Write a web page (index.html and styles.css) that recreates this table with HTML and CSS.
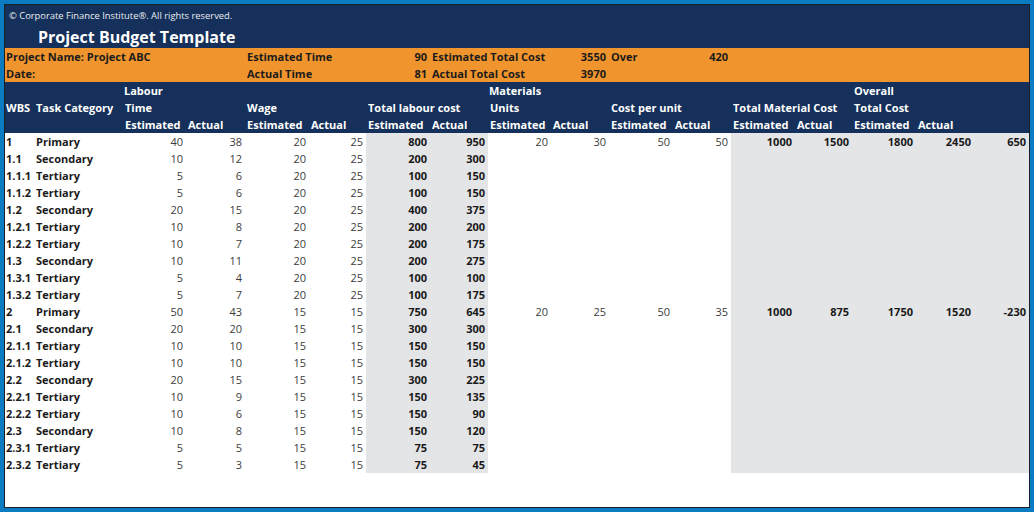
FILE: index.html
```html
<!DOCTYPE html>
<html>
<head>
<meta charset="utf-8">
<link rel="stylesheet" href="styles.css">
</head>
<body>
<div class="frame">
<div class="sheet">
  <div class="top">
    <div class="copy">© Corporate Finance Institute®. All rights reserved.</div>
    <div class="title">Project Budget Template</div>
  </div>
  <div class="info">
    <div class="row">
      <div class="c l" style="grid-column:1/5">Project Name: Project ABC</div>
      <div class="c l" style="grid-column:5/7">Estimated Time</div>
      <div class="c r" style="grid-column:7">90</div>
      <div class="c l" style="grid-column:8/10">Estimated Total Cost</div>
      <div class="c r" style="grid-column:10">3550</div>
      <div class="c l" style="grid-column:11">Over</div>
      <div class="c r" style="grid-column:12">420</div>
    </div>
    <div class="row">
      <div class="c l" style="grid-column:1/5">Date:</div>
      <div class="c l" style="grid-column:5/7">Actual Time</div>
      <div class="c r" style="grid-column:7">81</div>
      <div class="c l" style="grid-column:8/10">Actual Total Cost</div>
      <div class="c r" style="grid-column:10">3970</div>
    </div>
  </div>
  <div class="head">
    <div class="row">
      <div class="c l" style="grid-column:3/5">Labour</div>
      <div class="c l" style="grid-column:9/11">Materials</div>
      <div class="c l" style="grid-column:15/17">Overall</div>
    </div>
    <div class="row">
      <div class="c l" style="grid-column:1">WBS</div>
      <div class="c l" style="grid-column:2">Task Category</div>
      <div class="c l" style="grid-column:3/5">Time</div>
      <div class="c l" style="grid-column:5/7">Wage</div>
      <div class="c l" style="grid-column:7/9">Total labour cost</div>
      <div class="c l" style="grid-column:9/11">Units</div>
      <div class="c l" style="grid-column:11/13">Cost per unit</div>
      <div class="c l" style="grid-column:13/15">Total Material Cost</div>
      <div class="c l" style="grid-column:15/17">Total Cost</div>
    </div>
    <div class="row">
      <div class="c l" style="grid-column:3">Estimated</div><div class="c l">Actual</div>
      <div class="c l">Estimated</div><div class="c l">Actual</div>
      <div class="c l">Estimated</div><div class="c l">Actual</div>
      <div class="c l">Estimated</div><div class="c l">Actual</div>
      <div class="c l">Estimated</div><div class="c l">Actual</div>
      <div class="c l">Estimated</div><div class="c l">Actual</div>
      <div class="c l">Estimated</div><div class="c l">Actual</div>
    </div>
  </div>
  <div class="body">
    <div class="row"><div class="c l b">1</div><div class="c l b">Primary</div><div class="c r">40</div><div class="c r">38</div><div class="c r">20</div><div class="c r">25</div><div class="c r b g">800</div><div class="c r b g">950</div><div class="c r">20</div><div class="c r">30</div><div class="c r">50</div><div class="c r">50</div><div class="c r b g">1000</div><div class="c r b g">1500</div><div class="c r b g">1800</div><div class="c r b g">2450</div><div class="c r b g">650</div></div>
    <div class="row"><div class="c l b">1.1</div><div class="c l b">Secondary</div><div class="c r">10</div><div class="c r">12</div><div class="c r">20</div><div class="c r">25</div><div class="c r b g">200</div><div class="c r b g">300</div><div class="c"></div><div class="c"></div><div class="c"></div><div class="c"></div><div class="c g"></div><div class="c g"></div><div class="c g"></div><div class="c g"></div><div class="c g"></div></div>
    <div class="row"><div class="c l b">1.1.1</div><div class="c l b">Tertiary</div><div class="c r">5</div><div class="c r">6</div><div class="c r">20</div><div class="c r">25</div><div class="c r b g">100</div><div class="c r b g">150</div><div class="c"></div><div class="c"></div><div class="c"></div><div class="c"></div><div class="c g"></div><div class="c g"></div><div class="c g"></div><div class="c g"></div><div class="c g"></div></div>
    <div class="row"><div class="c l b">1.1.2</div><div class="c l b">Tertiary</div><div class="c r">5</div><div class="c r">6</div><div class="c r">20</div><div class="c r">25</div><div class="c r b g">100</div><div class="c r b g">150</div><div class="c"></div><div class="c"></div><div class="c"></div><div class="c"></div><div class="c g"></div><div class="c g"></div><div class="c g"></div><div class="c g"></div><div class="c g"></div></div>
    <div class="row"><div class="c l b">1.2</div><div class="c l b">Secondary</div><div class="c r">20</div><div class="c r">15</div><div class="c r">20</div><div class="c r">25</div><div class="c r b g">400</div><div class="c r b g">375</div><div class="c"></div><div class="c"></div><div class="c"></div><div class="c"></div><div class="c g"></div><div class="c g"></div><div class="c g"></div><div class="c g"></div><div class="c g"></div></div>
    <div class="row"><div class="c l b">1.2.1</div><div class="c l b">Tertiary</div><div class="c r">10</div><div class="c r">8</div><div class="c r">20</div><div class="c r">25</div><div class="c r b g">200</div><div class="c r b g">200</div><div class="c"></div><div class="c"></div><div class="c"></div><div class="c"></div><div class="c g"></div><div class="c g"></div><div class="c g"></div><div class="c g"></div><div class="c g"></div></div>
    <div class="row"><div class="c l b">1.2.2</div><div class="c l b">Tertiary</div><div class="c r">10</div><div class="c r">7</div><div class="c r">20</div><div class="c r">25</div><div class="c r b g">200</div><div class="c r b g">175</div><div class="c"></div><div class="c"></div><div class="c"></div><div class="c"></div><div class="c g"></div><div class="c g"></div><div class="c g"></div><div class="c g"></div><div class="c g"></div></div>
    <div class="row"><div class="c l b">1.3</div><div class="c l b">Secondary</div><div class="c r">10</div><div class="c r">11</div><div class="c r">20</div><div class="c r">25</div><div class="c r b g">200</div><div class="c r b g">275</div><div class="c"></div><div class="c"></div><div class="c"></div><div class="c"></div><div class="c g"></div><div class="c g"></div><div class="c g"></div><div class="c g"></div><div class="c g"></div></div>
    <div class="row"><div class="c l b">1.3.1</div><div class="c l b">Tertiary</div><div class="c r">5</div><div class="c r">4</div><div class="c r">20</div><div class="c r">25</div><div class="c r b g">100</div><div class="c r b g">100</div><div class="c"></div><div class="c"></div><div class="c"></div><div class="c"></div><div class="c g"></div><div class="c g"></div><div class="c g"></div><div class="c g"></div><div class="c g"></div></div>
    <div class="row"><div class="c l b">1.3.2</div><div class="c l b">Tertiary</div><div class="c r">5</div><div class="c r">7</div><div class="c r">20</div><div class="c r">25</div><div class="c r b g">100</div><div class="c r b g">175</div><div class="c"></div><div class="c"></div><div class="c"></div><div class="c"></div><div class="c g"></div><div class="c g"></div><div class="c g"></div><div class="c g"></div><div class="c g"></div></div>
    <div class="row"><div class="c l b">2</div><div class="c l b">Primary</div><div class="c r">50</div><div class="c r">43</div><div class="c r">15</div><div class="c r">15</div><div class="c r b g">750</div><div class="c r b g">645</div><div class="c r">20</div><div class="c r">25</div><div class="c r">50</div><div class="c r">35</div><div class="c r b g">1000</div><div class="c r b g">875</div><div class="c r b g">1750</div><div class="c r b g">1520</div><div class="c r b g">-230</div></div>
    <div class="row"><div class="c l b">2.1</div><div class="c l b">Secondary</div><div class="c r">20</div><div class="c r">20</div><div class="c r">15</div><div class="c r">15</div><div class="c r b g">300</div><div class="c r b g">300</div><div class="c"></div><div class="c"></div><div class="c"></div><div class="c"></div><div class="c g"></div><div class="c g"></div><div class="c g"></div><div class="c g"></div><div class="c g"></div></div>
    <div class="row"><div class="c l b">2.1.1</div><div class="c l b">Tertiary</div><div class="c r">10</div><div class="c r">10</div><div class="c r">15</div><div class="c r">15</div><div class="c r b g">150</div><div class="c r b g">150</div><div class="c"></div><div class="c"></div><div class="c"></div><div class="c"></div><div class="c g"></div><div class="c g"></div><div class="c g"></div><div class="c g"></div><div class="c g"></div></div>
    <div class="row"><div class="c l b">2.1.2</div><div class="c l b">Tertiary</div><div class="c r">10</div><div class="c r">10</div><div class="c r">15</div><div class="c r">15</div><div class="c r b g">150</div><div class="c r b g">150</div><div class="c"></div><div class="c"></div><div class="c"></div><div class="c"></div><div class="c g"></div><div class="c g"></div><div class="c g"></div><div class="c g"></div><div class="c g"></div></div>
    <div class="row"><div class="c l b">2.2</div><div class="c l b">Secondary</div><div class="c r">20</div><div class="c r">15</div><div class="c r">15</div><div class="c r">15</div><div class="c r b g">300</div><div class="c r b g">225</div><div class="c"></div><div class="c"></div><div class="c"></div><div class="c"></div><div class="c g"></div><div class="c g"></div><div class="c g"></div><div class="c g"></div><div class="c g"></div></div>
    <div class="row"><div class="c l b">2.2.1</div><div class="c l b">Tertiary</div><div class="c r">10</div><div class="c r">9</div><div class="c r">15</div><div class="c r">15</div><div class="c r b g">150</div><div class="c r b g">135</div><div class="c"></div><div class="c"></div><div class="c"></div><div class="c"></div><div class="c g"></div><div class="c g"></div><div class="c g"></div><div class="c g"></div><div class="c g"></div></div>
    <div class="row"><div class="c l b">2.2.2</div><div class="c l b">Tertiary</div><div class="c r">10</div><div class="c r">6</div><div class="c r">15</div><div class="c r">15</div><div class="c r b g">150</div><div class="c r b g">90</div><div class="c"></div><div class="c"></div><div class="c"></div><div class="c"></div><div class="c g"></div><div class="c g"></div><div class="c g"></div><div class="c g"></div><div class="c g"></div></div>
    <div class="row"><div class="c l b">2.3</div><div class="c l b">Secondary</div><div class="c r">10</div><div class="c r">8</div><div class="c r">15</div><div class="c r">15</div><div class="c r b g">150</div><div class="c r b g">120</div><div class="c"></div><div class="c"></div><div class="c"></div><div class="c"></div><div class="c g"></div><div class="c g"></div><div class="c g"></div><div class="c g"></div><div class="c g"></div></div>
    <div class="row"><div class="c l b">2.3.1</div><div class="c l b">Tertiary</div><div class="c r">5</div><div class="c r">5</div><div class="c r">15</div><div class="c r">15</div><div class="c r b g">75</div><div class="c r b g">75</div><div class="c"></div><div class="c"></div><div class="c"></div><div class="c"></div><div class="c g"></div><div class="c g"></div><div class="c g"></div><div class="c g"></div><div class="c g"></div></div>
    <div class="row"><div class="c l b">2.3.2</div><div class="c l b">Tertiary</div><div class="c r">5</div><div class="c r">3</div><div class="c r">15</div><div class="c r">15</div><div class="c r b g">75</div><div class="c r b g">45</div><div class="c"></div><div class="c"></div><div class="c"></div><div class="c"></div><div class="c g"></div><div class="c g"></div><div class="c g"></div><div class="c g"></div><div class="c g"></div></div>
  </div>
</div>
</div>
</body>
</html>
```
FILE: styles.css
```css
html, body {
  margin: 0;
  padding: 0;
}
body {
  width: 1034px;
  height: 512px;
  overflow: hidden;
  font-family: "Open Sans", "DejaVu Sans", sans-serif;
}
.frame {
  box-sizing: border-box;
  width: 1034px;
  height: 512px;
  border: 4px solid #0b7cc2;
  background: #0b7cc2;
}
.sheet {
  box-sizing: border-box;
  height: 100%;
  border: 1px solid #17202b;
  background: #ffffff;
  overflow: hidden;
}
.top {
  background: #15305a;
  color: #ffffff;
}
.copy {
  height: 22px;
  line-height: 22px;
  font-size: 9.4px;
  padding-left: 4px;
  color: #e9edf3;
}
.title {
  height: 21px;
  line-height: 21px;
  font-size: 16px;
  font-weight: 700;
  padding-left: 33px;
}
.row {
  display: grid;
  grid-template-columns: 30px 88px 63px 59px 64px 57px 64px 58px 63px 58px 64px 58px 64px 57px 64px 58px 55px;
  height: 17px;
}
.c {
  height: 17px;
  line-height: 17px;
  font-size: 11px;
  white-space: nowrap;
  overflow: visible;
}
.l {
  text-align: left;
  padding-left: 1px;
}
.r {
  text-align: right;
  padding-right: 3px;
}
.info {
  background: #f0952d;
  color: #1b1b1b;
  font-weight: 700;
}
.info .c {
  font-weight: 700;
}
.head {
  background: #15305a;
  color: #ffffff;
}
.head .c {
  font-weight: 700;
}
.head .row .c:not(:first-child):not(:nth-child(2)) {
  padding-left: 2px;
}
.head .row:last-child .c {
  padding-left: 2px;
}
.info .c.l:not(:first-child) {
  padding-left: 2px;
}
.body .c {
  color: #3c3c3c;
}
.body .c.b {
  font-weight: 700;
  color: #1a1a1a;
}
.body .c.g {
  background: #e4e5e7;
}
```
